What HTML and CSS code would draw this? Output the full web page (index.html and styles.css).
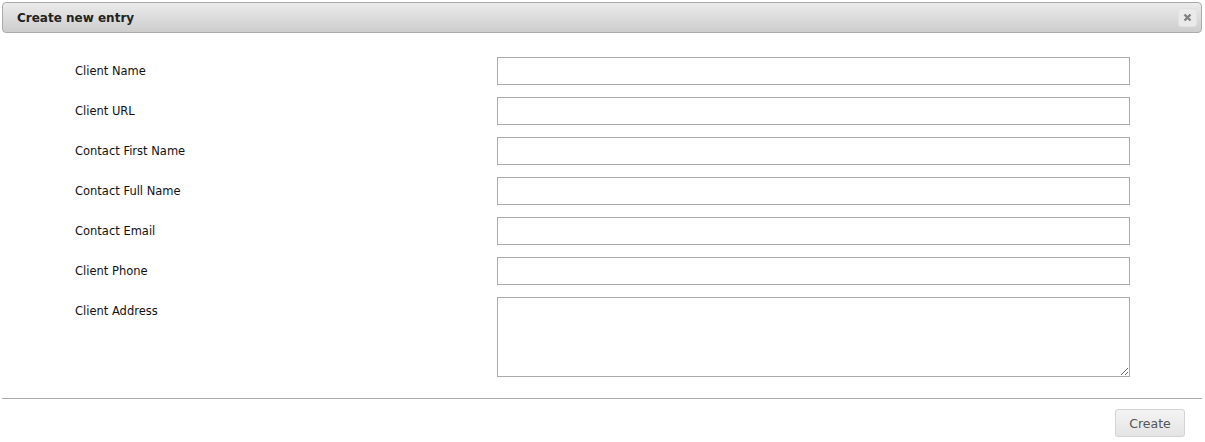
FILE: index.html
```html
<!DOCTYPE html>
<html>
<head>
<meta charset="utf-8">
<link rel="stylesheet" href="styles.css">
</head>
<body>
<div class="dialog">
  <div class="titlebar">
    <span class="title">Create new entry</span>
    <button class="close" type="button" aria-label="close">
      <svg width="9" height="9" viewBox="0 0 9 9"><path d="M1.5 1.5L7.5 7.5M7.5 1.5L1.5 7.5" stroke="#808080" stroke-width="2.4" stroke-linecap="butt"/></svg>
    </button>
  </div>
  <form class="form">
    <label class="lbl">Client Name</label><input class="field" type="text">
    <label class="lbl">Client URL</label><input class="field" type="text">
    <label class="lbl">Contact First Name</label><input class="field" type="text">
    <label class="lbl">Contact Full Name</label><input class="field" type="text">
    <label class="lbl">Contact Email</label><input class="field" type="text">
    <label class="lbl">Client Phone</label><input class="field" type="text">
    <label class="lbl">Client Address</label><textarea class="field area"></textarea>
  </form>
  <div class="buttonpane">
    <button class="btn" type="button">Create</button>
  </div>
</div>
</body>
</html>
```
FILE: styles.css
```css
html, body {
  margin: 0;
  padding: 0;
  background: #fff;
}
body {
  font-family: "DejaVu Sans", Verdana, sans-serif;
  color: #222;
}
.dialog {
  width: 1200px;
  margin: 2px 0 0 2px;
}
.titlebar {
  height: 29px;
  border: 1px solid #aaa;
  border-radius: 4px;
  background: linear-gradient(#ebebeb, #cdcdcd);
  display: flex;
  align-items: center;
  justify-content: space-between;
  padding: 0 4px 0 14px;
}
.title {
  font-weight: bold;
  font-size: 12px;
  color: #222;
}
.close {
  width: 19px;
  height: 19px;
  padding: 0;
  border: 1px solid #e2e2e2;
  border-radius: 3px;
  background: #eaeaea;
  display: flex;
  align-items: center;
  justify-content: center;
}
.form {
  display: grid;
  grid-template-columns: 422px 633px;
  row-gap: 12px;
  padding: 24px 0 21px 73px;
  margin: 0;
}
.lbl {
  font-size: 11.5px;
  line-height: 16px;
  padding-top: 6px;
  color: #111;
}
.field {
  box-sizing: border-box;
  width: 633px;
  height: 28px;
  border: 1px solid #aaa;
  margin: 0;
  padding: 2px 4px;
  font-family: inherit;
  font-size: 12px;
  background: #fff;
}
.area {
  height: 80px;
  resize: vertical;
}
.buttonpane {
  border-top: 1px solid #aaa;
  display: flex;
  justify-content: flex-end;
  padding: 10px 17px 0 0;
}
.btn {
  width: 70px;
  height: 28px;
  border: 1px solid #d3d3d3;
  border-radius: 3px;
  background: linear-gradient(#f4f4f4, #e4e4e4);
  color: #555;
  font-family: inherit;
  font-size: 12.5px;
  padding: 0;
}
```
